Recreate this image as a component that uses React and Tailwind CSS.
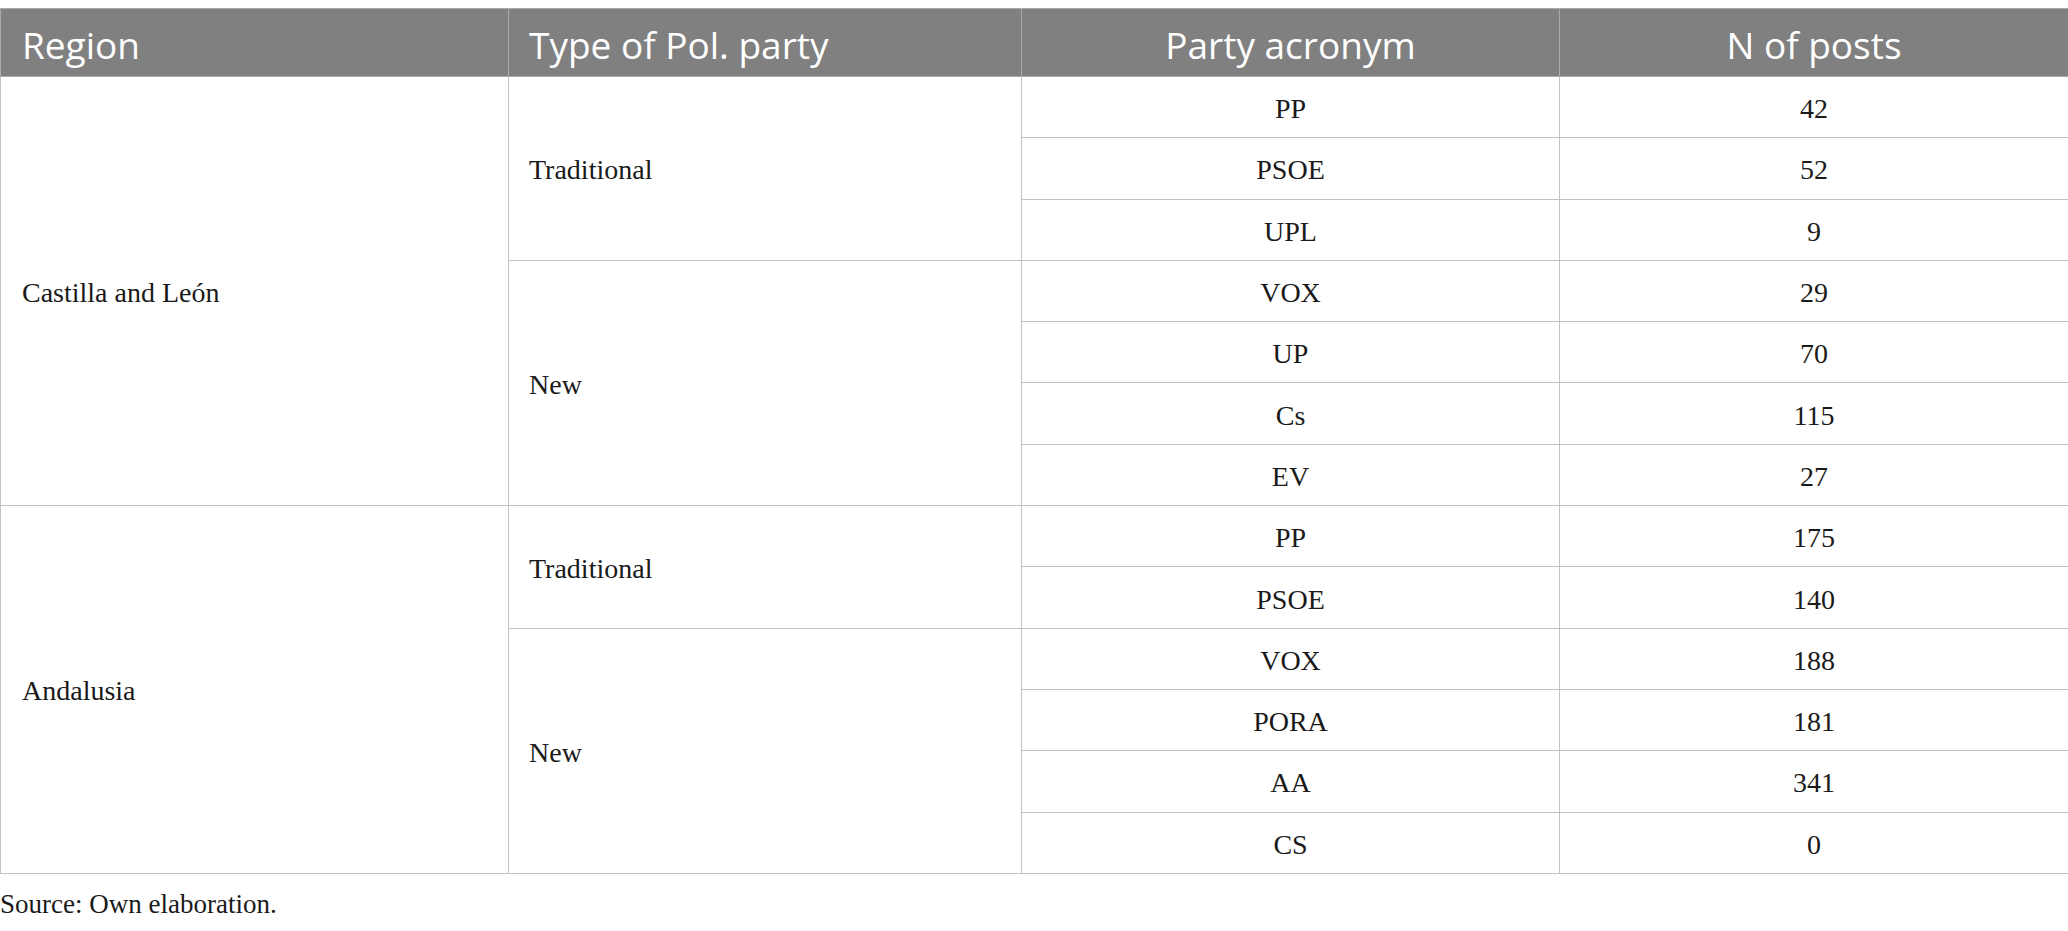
const rows = [
  { region: "Castilla and León", regionSpan: 7, type: "Traditional", typeSpan: 3, acronym: "PP", posts: "42" },
  { acronym: "PSOE", posts: "52" },
  { acronym: "UPL", posts: "9" },
  { type: "New", typeSpan: 4, acronym: "VOX", posts: "29" },
  { acronym: "UP", posts: "70" },
  { acronym: "Cs", posts: "115" },
  { acronym: "EV", posts: "27" },
  { region: "Andalusia", regionSpan: 6, type: "Traditional", typeSpan: 2, acronym: "PP", posts: "175" },
  { acronym: "PSOE", posts: "140" },
  { type: "New", typeSpan: 4, acronym: "VOX", posts: "188" },
  { acronym: "PORA", posts: "181" },
  { acronym: "AA", posts: "341" },
  { acronym: "CS", posts: "0" },
];

const cell = "border border-[#c2c2c2] align-middle pt-[4px]";
const head = "border border-[#a9a9a9] font-normal pt-[4px]";

export default function App() {
  return (
    <div className="bg-white w-[2068px] pt-2 text-[#1a1a1a] font-['Liberation_Serif',serif]">
      <table className="w-full border-collapse table-fixed">
        <colgroup>
          <col className="w-[508px]" />
          <col className="w-[513px]" />
          <col className="w-[538px]" />
          <col className="w-[509px]" />
        </colgroup>
        <thead>
          <tr className="h-[68px] bg-[#808080] text-white font-['Open_Sans',sans-serif] text-[37px]">
            <th className={`${head} text-left pl-[21px]`}>Region</th>
            <th className={`${head} text-left pl-[20px]`}>Type of Pol. party</th>
            <th className={`${head} text-center`}>Party acronym</th>
            <th className={`${head} text-center`}>N of posts</th>
          </tr>
        </thead>
        <tbody className="text-[28px]">
          {rows.map((r, i) => (
            <tr key={i} className="h-[61.3px]">
              {r.region && (
                <td rowSpan={r.regionSpan} className={`${cell} text-left pl-[21px]`}>
                  {r.region}
                </td>
              )}
              {r.type && (
                <td rowSpan={r.typeSpan} className={`${cell} text-left pl-[20px]`}>
                  {r.type}
                </td>
              )}
              <td className={`${cell} text-center`}>{r.acronym}</td>
              <td className={`${cell} text-center`}>{r.posts}</td>
            </tr>
          ))}
        </tbody>
      </table>
      <p className="mt-[15px] text-[27px] leading-[31px]">Source: Own elaboration.</p>
    </div>
  );
}
